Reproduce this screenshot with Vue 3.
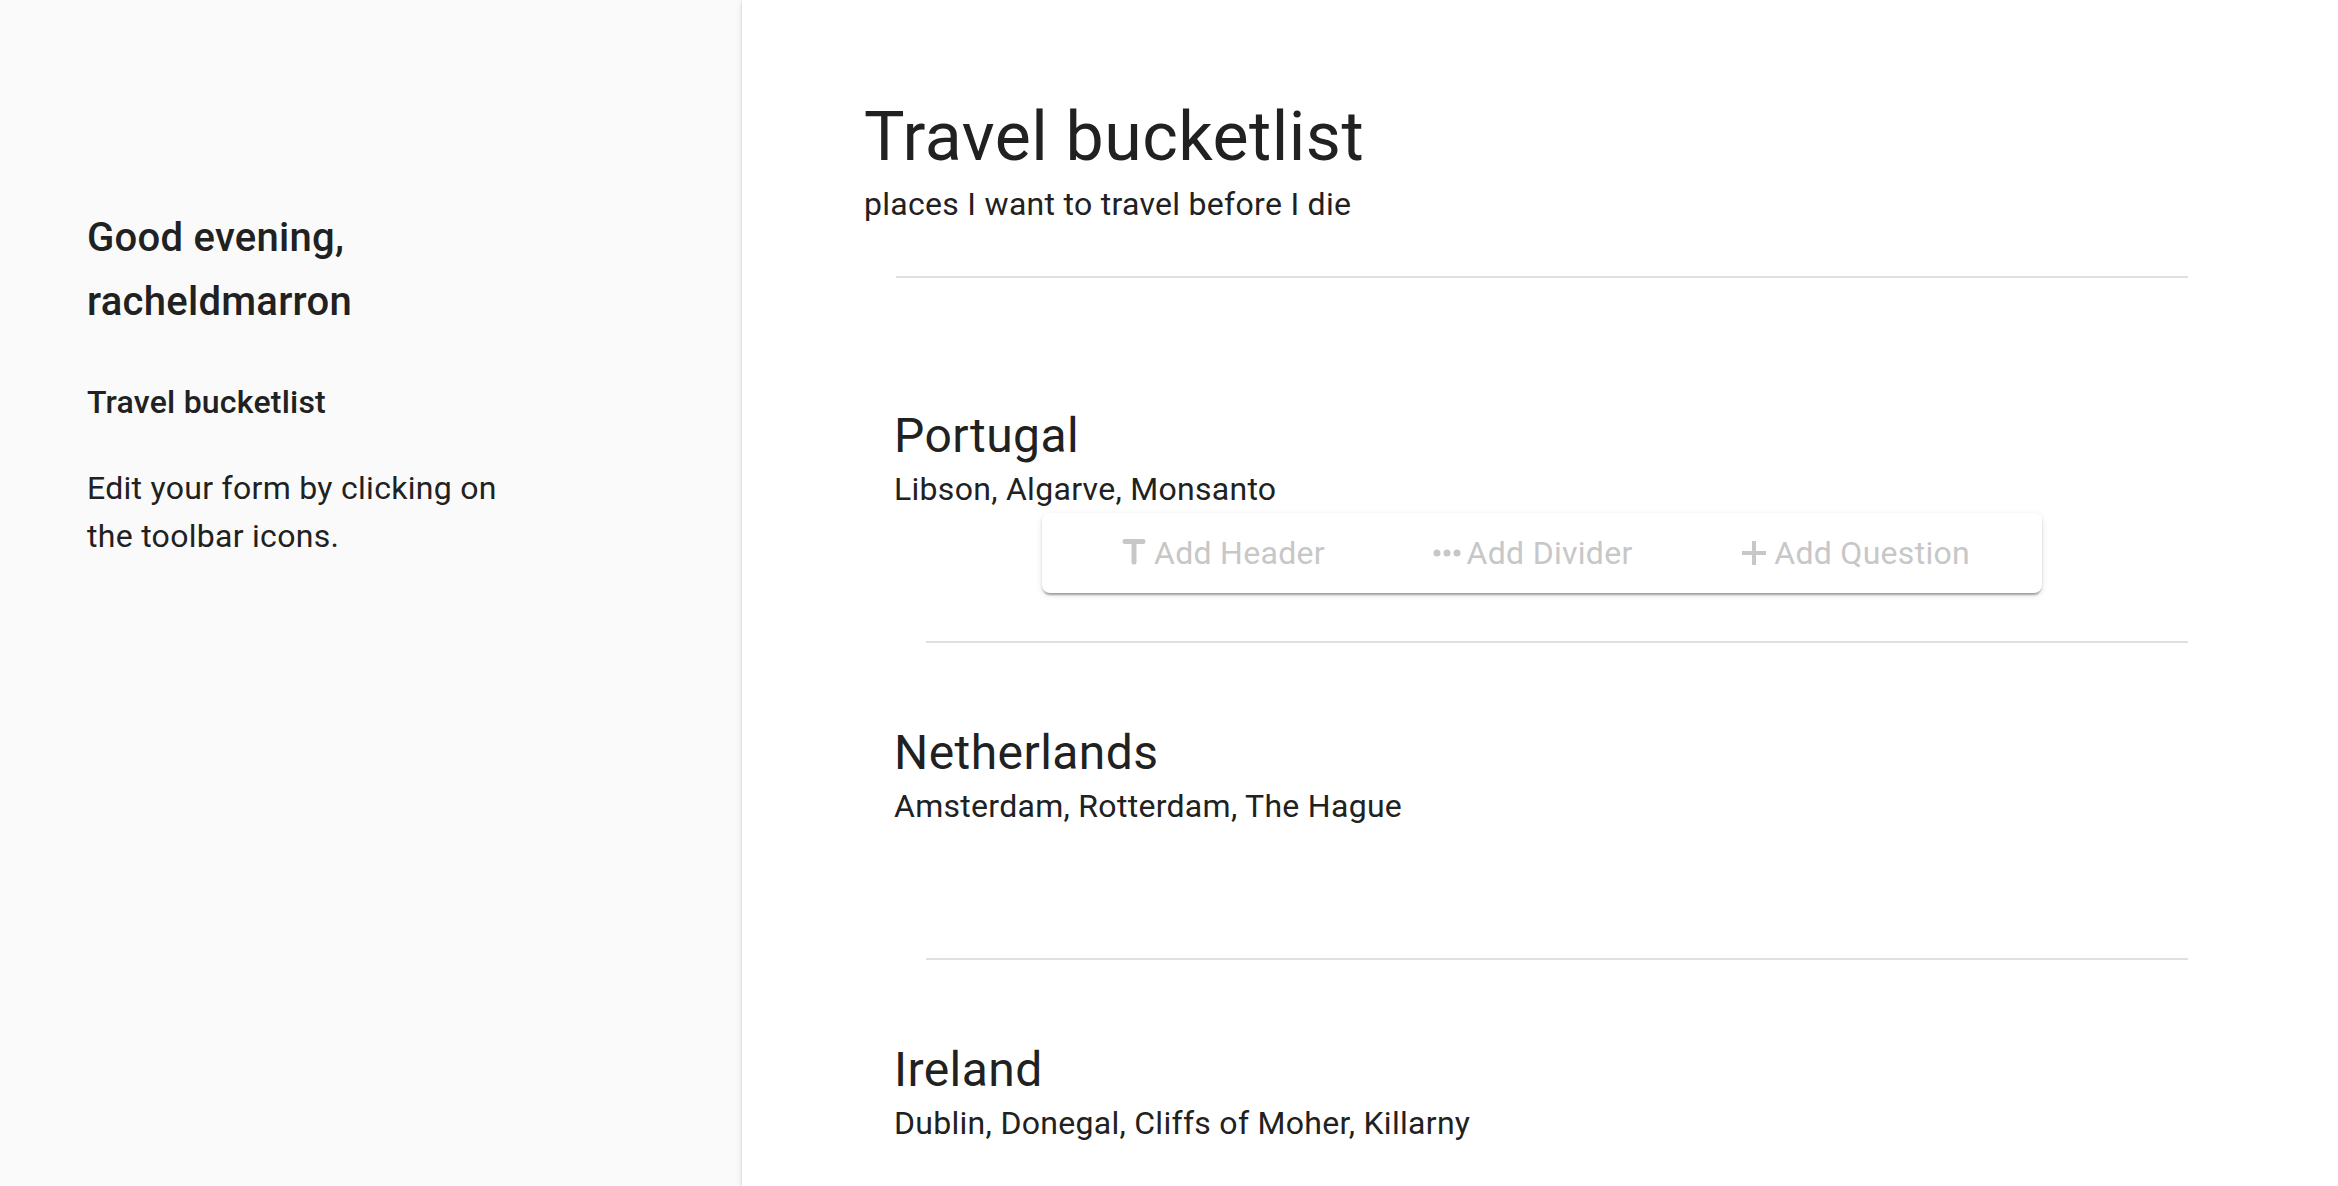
<script setup>
const sections = [
  { title: 'Portugal', text: 'Libson, Algarve, Monsanto', toolbar: true },
  { title: 'Netherlands', text: 'Amsterdam, Rotterdam, The Hague' },
  { title: 'Ireland', text: 'Dublin, Donegal, Cliffs of Moher, Killarny' },
]
</script>

<template>
  <div class="page">
    <aside class="side">
      <h2 class="greeting">Good evening,<br />racheldmarron</h2>
      <h3 class="form-name">Travel bucketlist</h3>
      <p class="hint">Edit your form by clicking on the toolbar icons.</p>
    </aside>
    <main class="form">
      <header>
        <h1 class="title">Travel bucketlist</h1>
        <p class="sub">places I want to travel before I die</p>
      </header>
      <hr class="rule head-rule" />
      <section v-for="s in sections" :key="s.title" class="section">
        <h2 class="name">{{ s.title }}</h2>
        <p class="sub">{{ s.text }}</p>
        <div class="slot">
          <div v-if="s.toolbar" class="toolbar">
            <button type="button" class="tool">
              <svg class="icon" viewBox="0 0 32 32" aria-hidden="true"><path d="M7 4.500H25M16 5V25" stroke-width="5" stroke-linecap="round" /></svg>
              <span>Add Header</span>
            </button>
            <button type="button" class="tool">
              <svg class="icon" viewBox="0 0 32 32" aria-hidden="true"><path d="M6 16h0M16 16h0M26 16h0" stroke-width="7" stroke-linecap="round" /></svg>
              <span>Add Divider</span>
            </button>
            <button type="button" class="tool">
              <svg class="icon" viewBox="0 0 32 32" aria-hidden="true"><path d="M4 16H28M16 4V28" stroke-width="4" /></svg>
              <span>Add Question</span>
            </button>
          </div>
        </div>
        <hr class="rule" />
      </section>
    </main>
  </div>
</template>

<style>
body {
  margin: 0;
}
</style>

<style scoped>
.page {
  display: flex;
  height: 100vh;
  overflow: hidden;
  color: #212121;
  background: #fafafa;
  font-family: Roboto, "Noto Sans", sans-serif;
  font-size: 32px;
}

h1, h2, h3, p, span {
  margin: 0;
  font-weight: 400;
  letter-spacing: 0.009em;
}

.side {
  flex: 0 0 742px;
  box-sizing: border-box;
  padding: 206px 220px 0 87px;
}

.side .greeting {
  font-size: 40px;
  line-height: 64px;
  font-weight: 500;
  letter-spacing: 0.007em;
}

.side .form-name {
  margin-top: 44px;
  font-size: 32px;
  line-height: 48px;
  font-weight: 500;
  letter-spacing: 0.007em;
}

.side .hint {
  margin-top: 38px;
  line-height: 48px;
}

.form {
  flex: 1;
  box-sizing: border-box;
  min-width: 0;
  padding: 94px 150px 0 122px;
  overflow-y: auto;
  scrollbar-width: none;
  background: #fff;
  box-shadow: 0 4px 2px -2px rgba(0, 0, 0, 0.2), 0 2px 2px rgba(0, 0, 0, 0.14), 0 2px 6px rgba(0, 0, 0, 0.12);
}

.title {
  font-size: 68px;
  line-height: 86px;
  letter-spacing: 0.007em;
}

.sub {
  line-height: 48px;
}

.rule {
  height: 2px;
  margin: 0 0 0 32px;
  border: 0;
  background: #e0e0e0;
}

.head-rule {
  margin-top: 48px;
  margin-bottom: 48px;
}

.section {
  padding: 81px 0 0 30px;
}

.name {
  font-size: 48px;
  line-height: 58px;
}

.slot {
  height: 128px;
}

.toolbar {
  display: flex;
  justify-content: space-between;
  box-sizing: border-box;
  max-width: 1000px;
  height: 80px;
  margin-left: 148px;
  padding: 0 72px 0 76px;
  border-radius: 8px;
  background: #fff;
  box-shadow: 0 4px 2px -2px rgba(0, 0, 0, 0.2), 0 2px 2px rgba(0, 0, 0, 0.14), 0 2px 6px rgba(0, 0, 0, 0.12);
}

.tool {
  display: flex;
  align-items: center;
  gap: 4px;
  padding: 0;
  border: 0;
  background: none;
  color: #c7c7c7;
  font: inherit;
  cursor: pointer;
}

.icon {
  width: 32px;
  height: 32px;
  fill: none;
  stroke: currentColor;
}
</style>
